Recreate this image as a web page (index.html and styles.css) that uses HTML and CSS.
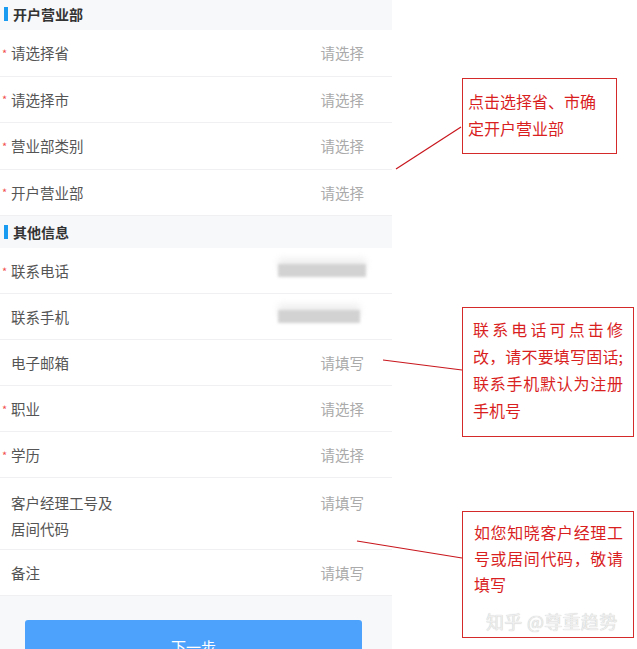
FILE: index.html
```html
<!DOCTYPE html>
<html lang="zh-CN">
<head>
    <meta charset="UTF-8">
    <meta name="viewport" content="width=device-width, initial-scale=1.0">
    <title>开户信息</title>
    <link rel="stylesheet" href="styles.css">
</head>
<body>
<div class="page">

  <div class="form">
    <div class="section-title first"><span class="bar"></span>开户营业部</div>
    <div class="group branch">
      <div class="row"><span class="star">*</span><span class="label">请选择省</span><span class="value">请选择</span></div>
      <div class="row"><span class="star">*</span><span class="label">请选择市</span><span class="value">请选择</span></div>
      <div class="row"><span class="star">*</span><span class="label">营业部类别</span><span class="value">请选择</span></div>
      <div class="row"><span class="star">*</span><span class="label">开户营业部</span><span class="value">请选择</span></div>
    </div>

    <div class="section-title"><span class="bar"></span>其他信息</div>
    <div class="group">
      <div class="row"><span class="star">*</span><span class="label">联系电话</span><span class="blurred"></span></div>
      <div class="row"><span class="star"></span><span class="label">联系手机</span><span class="blurred short"></span></div>
      <div class="row"><span class="star"></span><span class="label">电子邮箱</span><span class="value">请填写</span></div>
      <div class="row"><span class="star">*</span><span class="label">职业</span><span class="value">请选择</span></div>
      <div class="row"><span class="star">*</span><span class="label">学历</span><span class="value">请选择</span></div>
      <div class="row tall"><span class="star"></span><span class="label narrow">客户经理工号及居间代码</span><span class="value">请填写</span></div>
      <div class="row"><span class="star"></span><span class="label">备注</span><span class="value">请填写</span></div>
    </div>

    <div class="footer">
      <button class="btn">下一步</button>
    </div>
  </div>

  <!-- annotations -->
  <div class="notes">
    <div class="note note-1">点击选择省、市确<br>定开户营业部</div>
    <div class="note note-2">
      <div class="just">联系电话可点击修</div>
      <div class="just">改，请不要填写固话;</div>
      <div class="just">联系手机默认为注册</div>
      <div>手机号</div>
    </div>
    <div class="note note-3">
      <div class="just">如您知晓客户经理工</div>
      <div class="just">号或居间代码，敬请</div>
      <div>填写</div>
      <div class="watermark">知乎 @尊重趋势</div>
    </div>
  </div>

  <svg class="leaders" width="637" height="649">
    <line x1="396" y1="169" x2="461" y2="127"/>
    <line x1="383" y1="360" x2="462" y2="370"/>
    <line x1="357" y1="541" x2="462" y2="558"/>
  </svg>
</div>
</body>
</html>
```

FILE: styles.css
```css
* {
    margin: 0;
    padding: 0;
    box-sizing: border-box;
}

body {
    background: #fff;
    font-family: "Noto Sans CJK SC", "Noto Sans", sans-serif;
    overflow: hidden;
}

.page {
    position: relative;
    display: flex;
    width: 637px;
    height: 649px;
}

.form {
    width: 392px;
    flex-shrink: 0;
    background: #fff;
}

.section-title {
    display: flex;
    align-items: center;
    height: 32px;
    padding-left: 4px;
    background: #f7f8fa;
    font-size: 14px;
    font-weight: 700;
    color: #333;
}

.section-title.first {
    margin-top: -2px;
}

.section-title .bar {
    width: 4px;
    height: 14px;
    margin-right: 5px;
    background: #1a9bf2;
}

.row {
    display: flex;
    align-items: center;
    height: 46px;
    padding-right: 28px;
    border-bottom: 1px solid #f0f0f2;
    font-size: 14.5px;
}

.branch .row {
    height: 46.5px;
}

.row.tall {
    height: 72px;
    align-items: flex-start;
    padding-top: 12px;
    line-height: 26px;
}

.star {
    width: 11px;
    padding-left: 2px;
    font-size: 11px;
    color: #f25050;
}

.label {
    flex: 1;
    color: #555;
}

.label.narrow {
    flex: none;
    width: 104px;
    margin-right: auto;
}

.value {
    color: #aaa;
}

.blurred {
    width: 88px;
    height: 13px;
    margin-right: -2px;
    background: #d2d2d2;
    filter: blur(1.5px);
    box-shadow: 0 -6px 6px #f0f0f0;
}

.blurred.short {
    width: 82px;
    margin-right: 4px;
}

.footer {
    height: 60px;
    padding: 24px 0 0 25px;
    background: #f7f8fa;
}

.btn {
    width: 337px;
    height: 40px;
    padding-top: 12px;
    border: none;
    border-radius: 3px;
    background: #4da3fb;
    color: #fff;
    font-family: inherit;
    font-size: 15px;
    vertical-align: top;
}

.notes {
    padding-left: 70px;
}

.note {
    border: 1px solid #d42a2a;
    font-size: 16px;
    line-height: 27px;
    color: #d91f1f;
}

.note-1 {
    width: 155px;
    height: 76px;
    margin-top: 78px;
    padding: 9px 0 0 5px;
}

.note-2 {
    width: 172px;
    height: 130px;
    margin-top: 153px;
    padding: 8px 10px 0 10px;
}

.note-3 {
    display: flex;
    flex-direction: column;
    width: 172px;
    height: 127px;
    margin-top: 74px;
    padding: 7px 10px 0 11px;
    line-height: 26px;
}

.just {
    white-space: nowrap;
    text-align: justify;
    text-align-last: justify;
}

.watermark {
    margin-top: auto;
    padding: 0 0 3px 12px;
    font-size: 18px;
    color: #eeeeee;
    text-shadow: 0 0 1px #bbbbbb;
    letter-spacing: 0.3px;
}

.leaders {
    position: absolute;
    left: 0;
    top: 0;
    pointer-events: none;
}

.leaders line {
    stroke: #c8161d;
    stroke-width: 1.2;
}
```
